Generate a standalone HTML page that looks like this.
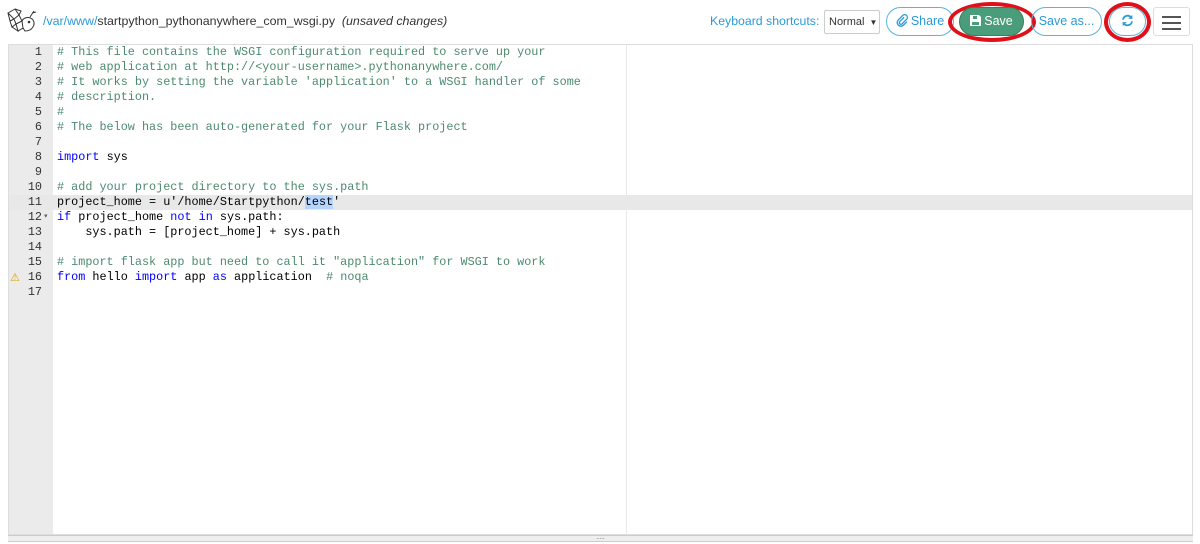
<!DOCTYPE html>
<html><head><meta charset="utf-8"><style>
body{margin:0;width:1200px;height:544px;background:#fff;font-family:"Liberation Sans",sans-serif;position:relative;overflow:hidden}
.abs{position:absolute}
.path{left:43px;top:14px;font-size:12.4px;color:#333;white-space:nowrap}
.path .b{color:#2b9ad7}
.kb{left:710px;top:14px;font-size:12.3px;color:#2b9ad7;white-space:nowrap}
.sel{left:824px;top:10px;width:56px;height:24px;border:1px solid #ccc;border-radius:2px;font-size:11px;color:#333;box-sizing:border-box;padding:5px 0 0 4px;white-space:nowrap}
.btn{box-sizing:border-box;border:1px solid #5ab4e0;border-radius:15px;color:#2b9ad7;font-size:12.5px;text-align:center;line-height:27px;height:29px;top:7px;white-space:nowrap}
.ed{left:8px;top:44px;width:1185px;height:491px;border:1px solid #ddd;box-sizing:border-box}
.gut{left:9px;top:45px;width:44px;height:489px;background:#ebebeb}
.code{font-family:"Liberation Mono",monospace;font-size:11.8px;line-height:15px;white-space:pre}
.ln{left:9px;top:45px;width:33px;text-align:right;color:#333}
.src{left:57px;top:45px;color:#000}
.c{color:#4d8a6f}.k{color:#0000ff}
</style></head><body>
<svg class="abs" style="left:6px;top:7px" width="34" height="28" viewBox="0 0 34 28" fill="none" stroke="#333" stroke-width="1"><path d="M2 6 L9 2 L13 8 L8 12 Z M9 2 L15 4 L13 8 M8 12 L13 8 L16 14 L10 17 Z M4 14 L8 12 L10 17 L6 20 Z M10 17 L16 14 L17 21 L12 24 Z M6 20 L10 17 L12 24 Z M2 6 L4 14 M16 14 C18 10 24 9 27 13 C30 18 26 24 19 24 L17 21"/><path d="M24 10 L28 4 M26 6 L30 5"/><circle cx="23" cy="15" r="0.8" fill="#333"/></svg>
<div class="abs path"><span class="b">/var/www/</span>startpython_pythonanywhere_com_wsgi.py &nbsp;<i>(unsaved changes)</i></div>
<div class="abs kb">Keyboard shortcuts:</div>
<div class="abs sel">Normal <span style="font-size:8px;margin-left:2px">▼</span></div>
<div class="abs btn" style="left:886px;width:68px"><svg width="13" height="13" viewBox="0 0 16 16" style="vertical-align:-2px;margin-right:2px" fill="none" stroke="#2b9ad7" stroke-width="1.6"><path d="M10 4 L4.5 9.5 a2 2 0 0 0 2.8 2.8 L13 6.5 a3.3 3.3 0 0 0 -4.7 -4.7 L2.8 7.3 a4.5 4.5 0 0 0 6.4 6.4 L13.5 9.5"/></svg>Share</div>
<div class="abs" style="left:948px;top:2px;width:88px;height:40px;border:4px solid #e0101a;border-radius:50%;box-sizing:border-box"></div>
<div class="abs btn" style="left:959px;width:65px;background:#4a9d7a;border-color:#3a7d60;color:#fff"><svg width="11" height="11" viewBox="0 0 11 11" style="vertical-align:-1px;margin-right:3px"><path d="M0 0H9L11 2V11H0Z" fill="#fff"/><rect x="3" y="1" width="4" height="3" fill="#4a9d7a"/><rect x="2" y="7" width="7" height="3" fill="#4a9d7a"/></svg>Save</div>
<div class="abs btn" style="left:1031px;width:71px">Save as...</div>
<div class="abs btn" style="left:1109px;width:37px"><svg width="13" height="13" viewBox="0 0 16 16" style="vertical-align:-2px" fill="none" stroke="#2b9ad7" stroke-width="2.2"><path d="M2.5 7 A5.5 5.5 0 0 1 12.5 4.5"/><path d="M13.5 9 A5.5 5.5 0 0 1 3.5 11.5"/><path d="M13.5 1.5 V5.5 H9.5" fill="#2b9ad7" stroke-width="1"/><path d="M2.5 14.5 V10.5 H6.5" fill="#2b9ad7" stroke-width="1"/></svg></div>
<div class="abs" style="left:1104px;top:2px;width:47px;height:40px;border:4px solid #e0101a;border-radius:50%;box-sizing:border-box"></div>
<div class="abs" style="left:1153px;top:7px;width:37px;height:29px;border:1px solid #ddd;border-radius:3px;box-sizing:border-box">
<div style="margin:8px 8px 0;height:2px;background:#555"></div><div style="margin:4px 8px 0;height:2px;background:#555"></div><div style="margin:4px 8px 0;height:2px;background:#555"></div></div>
<div class="abs ed"></div>
<div class="abs gut"></div>
<div class="abs" style="left:9px;top:195px;width:1183px;height:15px;background:#e8e8e8"></div>
<div class="abs" style="left:626px;top:45px;width:1px;height:489px;background:#e8e8e8"></div>
<div class="abs" style="left:8px;top:535px;width:1185px;height:5px;background:#eee;border-top:1px solid #ccc;border-bottom:1px solid #ccc;font-size:6px;text-align:center;line-height:4px;color:#666">.....</div>
<div class="abs code ln">1
2
3
4
5
6
7
8
9
10
11
12
13
14
15
16
17</div>
<div class="abs" style="left:44px;top:212px;font-size:7px;color:#666">▾</div>
<div class="abs" style="left:10px;top:271px;font-size:11px;color:#d9a400">⚠</div>
<div class="abs code src"><span class="c"># This file contains the WSGI configuration required to serve up your
# web application at http://&lt;your-username&gt;.pythonanywhere.com/
# It works by setting the variable 'application' to a WSGI handler of some
# description.
#
# The below has been auto-generated for your Flask project</span>

<span class="k">import</span> sys

<span class="c"># add your project directory to the sys.path</span>
project_home = u'/home/Startpython/<span style="background:#b5d5ff">test</span>'
<span class="k">if</span> project_home <span class="k">not in</span> sys.path:
    sys.path = [project_home] + sys.path

<span class="c"># import flask app but need to call it "application" for WSGI to work</span>
<span class="k">from</span> hello <span class="k">import</span> app <span class="k">as</span> application  <span class="c"># noqa</span>
</div>
</body></html>
